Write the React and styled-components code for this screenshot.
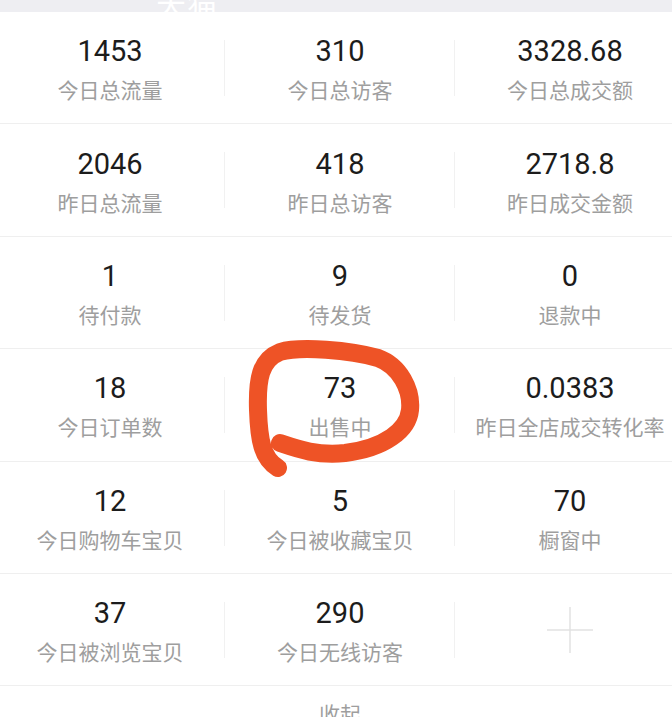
import React from 'react';
import styled, { createGlobalStyle } from 'styled-components';

const GlobalStyle = createGlobalStyle`
    html, body {
        margin: 0;
        padding: 0;
        background: #ffffff;
        overflow: hidden;
    }
    body {
        font-family: Roboto, "Noto Sans CJK SC", sans-serif;
    }
`;

const Page = styled.div`
    position: relative;
    width: 672px;
    height: 717px;
    overflow: hidden;
    background: #ffffff;
`;

const TopStrip = styled.div`
    height: 12px;
    display: flex;
    align-items: flex-end;
    padding-left: 156px;
    background: #eeeef2;
    overflow: hidden;
`;

const StripTitle = styled.span`
    font-family: "Noto Sans CJK SC", sans-serif;
    font-size: 30px;
    line-height: 30px;
    color: #ffffff;
    margin-bottom: -5px;
    letter-spacing: 1px;
`;

const Board = styled.div`
    width: 690px;
    margin-left: -5px;
`;

const Row = styled.div`
    display: grid;
    grid-template-columns: repeat(3, 230px);
    height: 112.4px;
    box-sizing: border-box;
    border-bottom: 1.5px solid #efefef;
`;

const Cell = styled.div`
    position: relative;
    display: flex;
    flex-direction: column;
    align-items: center;
    justify-content: center;
    gap: 7px;
    padding-top: 2px;
    box-sizing: border-box;

    &:not(:last-child)::after {
        content: "";
        position: absolute;
        right: 0;
        top: 28px;
        height: 56px;
        width: 1.5px;
        background: #f1f1f1;
    }
`;

const Value = styled.span`
    font-family: Roboto, sans-serif;
    font-size: 29px;
    line-height: 34px;
    color: #1c1c1c;
`;

const Label = styled.span`
    font-family: "Noto Sans CJK SC", sans-serif;
    font-size: 21px;
    line-height: 28px;
    color: #9e9e9e;
    white-space: nowrap;
`;

const PlusIcon = styled.svg`
    width: 46px;
    height: 46px;
    margin-top: -2px;
`;

const Footer = styled.div`
    display: flex;
    justify-content: center;
    padding-top: 13px;
`;

const FooterText = styled.span`
    font-family: "Noto Sans CJK SC", sans-serif;
    font-size: 21px;
    line-height: 28px;
    color: #9e9e9e;
`;

const Mark = styled.svg`
    position: absolute;
    left: 0;
    top: 0;
    pointer-events: none;
`;

const rows = [
    [['1453', '今日总流量'], ['310', '今日总访客'], ['3328.68', '今日总成交额']],
    [['2046', '昨日总流量'], ['418', '昨日总访客'], ['2718.8', '昨日成交金额']],
    [['1', '待付款'], ['9', '待发货'], ['0', '退款中']],
    [['18', '今日订单数'], ['73', '出售中'], ['0.0383', '昨日全店成交转化率']],
    [['12', '今日购物车宝贝'], ['5', '今日被收藏宝贝'], ['70', '橱窗中']],
    [['37', '今日被浏览宝贝'], ['290', '今日无线访客'], null],
];

const StatCell = ({ item }) => {
    if (!item) {
        return (
            <Cell>
                <PlusIcon viewBox="0 0 46 46">
                    <path d="M23 0 V46 M0 23 H46" stroke="#e2e2e2" strokeWidth="1.5" fill="none" />
                </PlusIcon>
            </Cell>
        );
    }
    const [value, label] = item;
    return (
        <Cell>
            <Value>{value}</Value>
            <Label>{label}</Label>
        </Cell>
    );
};

const App = () => {
    return (
        <Page>
            <GlobalStyle />
            <TopStrip>
                <StripTitle>天猫</StripTitle>
            </TopStrip>
            <Board>
                {rows.map((row, i) => (
                    <Row key={i}>
                        {row.map((item, j) => (
                            <StatCell key={j} item={item} />
                        ))}
                    </Row>
                ))}
                <Footer>
                    <FooterText>收起</FooterText>
                </Footer>
            </Board>
            <Mark width="672" height="717" viewBox="0 0 672 717">
                <path
                    d="M278 468 C262 458 259 440 258 410 C257 380 260 360 280 352 C300 346 350 350 378 358 C400 366 412 390 410 410 C408 430 385 448 345 453 C315 456 295 448 280 443"
                    stroke="#ee5326"
                    strokeWidth="18"
                    strokeLinecap="round"
                    strokeLinejoin="round"
                    fill="none"
                />
            </Mark>
        </Page>
    );
};

export default App;
